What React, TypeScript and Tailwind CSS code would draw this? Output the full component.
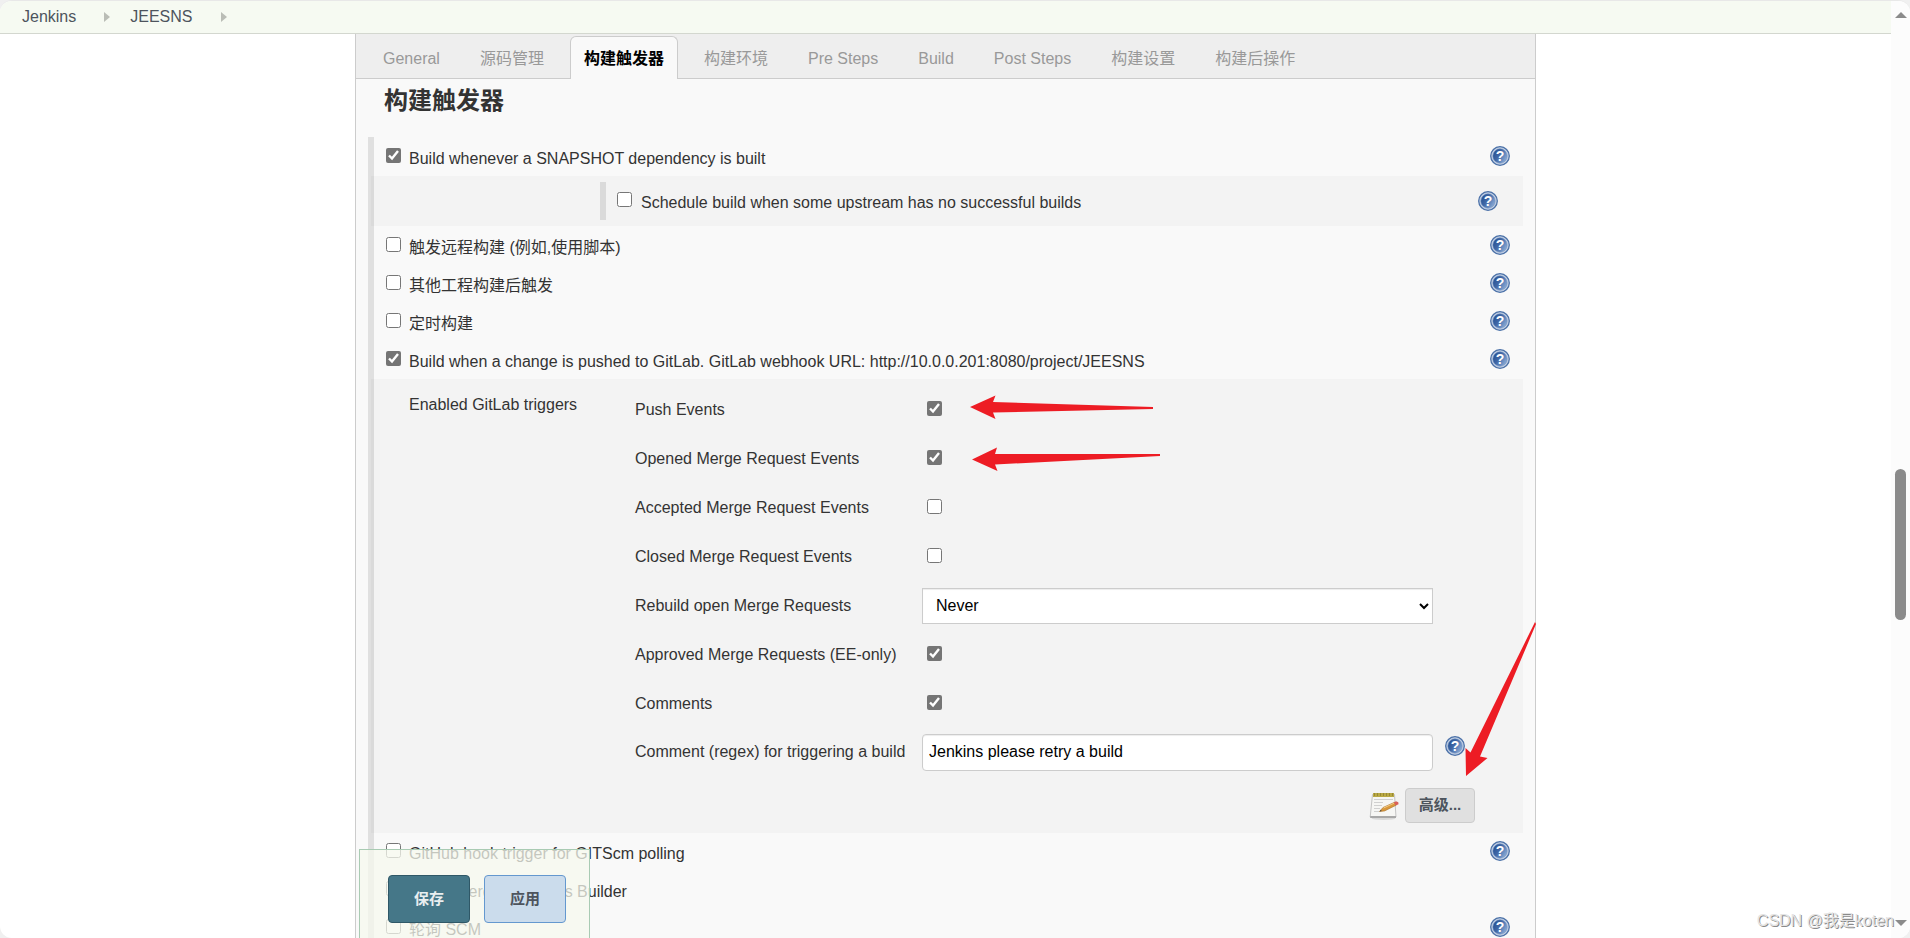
import { useId, useState } from 'react';
import clsx from 'clsx';

interface Tab {
    id: string;
    label: string;
}

interface GitlabEvent {
    id: string;
    label: string;
    checked: boolean;
}

const TABS: Tab[] = [
    { id: 'general', label: 'General' },
    { id: 'scm', label: '源码管理' },
    { id: 'triggers', label: '构建触发器' },
    { id: 'env', label: '构建环境' },
    { id: 'pre', label: 'Pre Steps' },
    { id: 'build', label: 'Build' },
    { id: 'post', label: 'Post Steps' },
    { id: 'settings', label: '构建设置' },
    { id: 'after', label: '构建后操作' },
];

const EVENTS_BEFORE: GitlabEvent[] = [
    { id: 'push', label: 'Push Events', checked: true },
    { id: 'opened', label: 'Opened Merge Request Events', checked: true },
    { id: 'accepted', label: 'Accepted Merge Request Events', checked: false },
    { id: 'closed', label: 'Closed Merge Request Events', checked: false },
];

const EVENTS_AFTER: GitlabEvent[] = [
    { id: 'approved', label: 'Approved Merge Requests (EE-only)', checked: true },
    { id: 'comments', label: 'Comments', checked: true },
];

function HelpButton({ className }: { className?: string }) {
    const gradient = useId();

    return (
        <button type="button" aria-label="Help" className={clsx("block size-5 shrink-0 cursor-pointer", className)}>
            <svg viewBox="0 0 20 20" className="size-5">
                <defs>
                    <linearGradient id={gradient} x1="0" y1="0" x2="1" y2="0.6">
                        <stop offset="0" stopColor="#1f4a8c" />
                        <stop offset="0.5" stopColor="#3f67a6" />
                        <stop offset="1" stopColor="#86a6d2" />
                    </linearGradient>
                </defs>
                <circle cx="10" cy="10" r="9.3" fill="#c3d0e4" stroke="#4b71a8" strokeWidth="1.3" />
                <circle cx="10" cy="10" r="7.2" fill={`url(#${gradient})`} stroke="#6c8cbc" strokeWidth="0.5" />
                <text x="10" y="15" textAnchor="middle" fontSize="14" fontWeight="bold" fill="#ffffff">?</text>
            </svg>
        </button>
    );
}

function NotepadIcon() {
    return (
        <svg viewBox="0 0 30 30" className="size-[30px] shrink-0" aria-hidden="true">
            <ellipse cx="14.5" cy="27.5" rx="12" ry="1.5" fill="#d8d8d8" />
            <path d="M3.5 3.5h22l1.5 22.5H1.2z" fill="#f6f6f4" stroke="#c4c4c4" />
            <path d="M1.2 25H27V27H1.2z" fill="#a8a8a8" />
            <path d="M4 2h21v4H4z" fill="#b9a945" />
            <path d="M5.5 2v3M8.5 2v3M11.5 2v3M14.5 2v3M17.5 2v3M20.5 2v3M23.5 2v3" stroke="#978936" />
            <path d="M5 8.5h19M5 11.5h9M5 14.5h8M5 17.5h6M5 20.5h5" stroke="#d0d0d0" />
            <path d="M10.5 20.5l3.500-4L25.500 11.300l1.500 3-11.500 5.700z" fill="#d9983b" stroke="#a8702a" strokeWidth="0.6" />
            <path d="M14.5 17L25.5 12" stroke="#f3cb86" />
            <path d="M24.800 11.500l2.200-1.200 2.300 1 .2 2-2.700 1.300z" fill="#d9605a" />
            <path d="M10.500 20.500l1.300-1.700.9 1.100z" fill="#444444" />
        </svg>
    );
}

interface TriggerRowProps {
    label: string;
    defaultChecked?: boolean;
    help?: boolean;
}

function TriggerRow({ label, defaultChecked = false, help = true }: TriggerRowProps) {
    return (
        <div className="flex h-[38px] items-start pl-3 pr-[13px]">
            <label className="flex flex-1 items-start gap-2 pt-2.5">
                <input type="checkbox" defaultChecked={defaultChecked} className="size-[15px] accent-[#757575]" />
                <span className="pt-px leading-5">{label}</span>
            </label>
            {help && <HelpButton className="mt-2" />}
        </div>
    );
}

function EventRow({ event }: { event: GitlabEvent }) {
    return (
        <tr className="h-[49px]">
            <td>
                <label htmlFor={event.id}>{event.label}</label>
            </td>
            <td className="pl-[5px]">
                <input
                    id={event.id}
                    type="checkbox"
                    defaultChecked={event.checked}
                    className="mb-0.5 block size-[15px] accent-[#757575]"
                />
            </td>
            <td />
        </tr>
    );
}

function GitlabTriggers() {
    return (
        <div className="relative -ml-[3px] flex bg-black/[0.025] pb-2 pl-[38px] pr-12">
            <div className="w-[226px] shrink-0 pt-4 leading-5">Enabled GitLab triggers</div>
            <div className="flex-1 pt-1.5">
                <table className="w-full table-fixed border-collapse leading-5">
                    <colgroup>
                        <col className="w-[287px]" />
                        <col />
                        <col className="w-[42px]" />
                    </colgroup>
                    <tbody>
                        {EVENTS_BEFORE.map(event => <EventRow key={event.id} event={event} />)}
                        <tr className="h-[49px]">
                            <td><label htmlFor="rebuild">Rebuild open Merge Requests</label></td>
                            <td>
                                <select
                                    id="rebuild"
                                    defaultValue="never"
                                    className="block h-9 w-full border border-[#cccccc] bg-white pl-[9px] text-black shadow-[inset_0_1px_1px_rgba(0,0,0,0.075)]"
                                >
                                    <option value="never">Never</option>
                                    <option value="source">On push to source branch</option>
                                    <option value="both">On push to source or target branch</option>
                                </select>
                            </td>
                            <td />
                        </tr>
                        {EVENTS_AFTER.map(event => <EventRow key={event.id} event={event} />)}
                        <tr className="h-12">
                            <td><label htmlFor="regex">Comment (regex) for triggering a build</label></td>
                            <td>
                                <input
                                    id="regex"
                                    type="text"
                                    defaultValue="Jenkins please retry a build"
                                    className="block h-[37px] w-full rounded border border-[#cccccc] bg-white px-1.5 text-black shadow-[inset_0_1px_1px_rgba(0,0,0,0.075)]"
                                />
                            </td>
                            <td className="pb-3 pl-3"><HelpButton /></td>
                        </tr>
                    </tbody>
                </table>
                <div className="flex h-[49px] items-center justify-end gap-1.5 pt-2.5">
                    <NotepadIcon />
                    <button
                        type="button"
                        className="h-[35px] w-[70px] cursor-pointer rounded border border-[#cccccc] bg-[#e0e0e0] text-[15px] font-bold text-[#4d545d]"
                    >
                        高级...
                    </button>
                </div>
            </div>
        </div>
    );
}

function Breadcrumbs() {
    return (
        <nav className="flex h-[33px] shrink-0 items-center border-b border-[#d3d7cf] bg-[#f6faf2] pl-[22px] text-[#4d545d]">
            {['Jenkins', 'JEESNS'].map(name => (
                <div key={name} className="flex items-center">
                    <a href="#" className="leading-5">{name}</a>
                    <svg viewBox="0 0 6 10" className="ml-7 mr-5 h-2.5 w-1.5" aria-hidden="true">
                        <path d="M0 0l6 5-6 5z" fill="#babdb6" />
                    </svg>
                </div>
            ))}
        </nav>
    );
}

function Scrollbar() {
    return (
        <div className="flex w-[19px] shrink-0 flex-col items-center bg-[#fcfcfc] pb-3 pt-[11px]">
            <svg viewBox="0 0 12 6" className="h-1.5 w-3" aria-hidden="true"><path d="M6 0l6 6H0z" fill="#8b8b8b" /></svg>
            <div className="flex-[451]" />
            <div className="w-[11px] flex-[151] rounded-full bg-[#8b8b8b]" />
            <div className="flex-[300]" />
            <svg viewBox="0 0 12 6" className="h-1.5 w-3" aria-hidden="true"><path d="M0 0h12L6 6z" fill="#8b8b8b" /></svg>
        </div>
    );
}

// Hand-drawn arrows pointing at the options to enable
function Annotations() {
    return (
        <svg
            viewBox="0 0 1181 904"
            className="pointer-events-none absolute -left-px top-0 h-[904px] w-[1181px]"
            fill="#ed1c24"
            aria-hidden="true"
        >
            <path d="M615 373L640.500 361.500 638 368 798 373 798 375 638 378.500 640.500 385z" />
            <path d="M617 425.500L642 413.500 640 420 805 420 805 422 640 430.500 642.500 437z" />
            <path d="M1180 588L1181 590 1125 722.500 1132.500 724 1111 742 1110.500 714 1115.500 718.500z" />
        </svg>
    );
}

export default function App() {
    const [activeTab, setActiveTab] = useState('triggers');

    return (
        <div className="h-screen bg-[#f0f0f0] font-['Liberation_Sans','Noto_Sans_CJK_SC',sans-serif] text-base text-[#333333]">
            <div className="relative flex h-full overflow-hidden rounded-xl border-t border-[#e8e8e8] bg-white">
                <div className="flex min-w-0 flex-1 flex-col">
                    <Breadcrumbs />

                    <main className="relative mx-auto min-h-0 w-full max-w-[1181px] flex-1 border-x border-[#cccccc] bg-[#f9f9f9]">
                        <div className="h-full overflow-hidden">
                            {/* Config tabs */}
                            <div role="tablist" className="flex h-[45px] items-end gap-3 border-b border-[#cccccc] bg-[#eeeeee] pl-[13px]">
                                {TABS.map(tab => (
                                    <button
                                        key={tab.id}
                                        type="button"
                                        role="tab"
                                        aria-selected={tab.id === activeTab}
                                        onClick={() => setActiveTab(tab.id)}
                                        className={clsx(
                                            "-mb-px h-[43px] cursor-pointer whitespace-nowrap rounded-t-md border border-b-0 px-[13px] pt-px leading-5",
                                            tab.id === activeTab
                                                ? "border-[#cccccc] bg-[#f9f9f9] font-bold text-black"
                                                : "border-transparent text-[#999999]"
                                        )}
                                    >
                                        {tab.label}
                                    </button>
                                ))}
                            </div>

                            <h1 className="pl-7 pt-1.5 text-2xl font-bold leading-8">构建触发器</h1>

                            {/* Trigger list */}
                            <section className="ml-3 mr-3 mt-5 border-l-[6px] border-[#e0e0e0] pt-px">
                                <TriggerRow label="Build whenever a SNAPSHOT dependency is built" defaultChecked />
                                <div className="relative -ml-[3px] mb-px bg-black/[0.025] py-1.5 pl-[229px]">
                                    <div className="border-l-[6px] border-[#dadada]">
                                        <div className="flex h-[38px] items-start pl-[11px] pr-[25px]">
                                            <label className="flex flex-1 items-start gap-[9px] pt-2.5">
                                                <input type="checkbox" className="size-[15px] accent-[#757575]" />
                                                <span className="pt-px leading-5">Schedule build when some upstream has no successful builds</span>
                                            </label>
                                            <HelpButton className="mt-[9px]" />
                                        </div>
                                    </div>
                                </div>
                                <TriggerRow label="触发远程构建 (例如,使用脚本)" />
                                <TriggerRow label="其他工程构建后触发" />
                                <TriggerRow label="定时构建" />
                                <TriggerRow
                                    label="Build when a change is pushed to GitLab. GitLab webhook URL: http://10.0.0.201:8080/project/JEESNS"
                                    defaultChecked
                                />
                                <GitlabTriggers />
                                <TriggerRow label="GitHub hook trigger for GITScm polling" />
                                <TriggerRow label="Gitlab Merge Requests Builder" help={false} />
                                <TriggerRow label="轮询 SCM" />
                            </section>
                        </div>

                        <Annotations />

                        {/* Sticky save bar */}
                        <div className="absolute bottom-0 left-[3px] flex gap-3.5 border border-b-0 border-[#a9cbb3] bg-[#f5f8ee]/75 pb-[15px] pl-7 pr-[23px] pt-[25px]">
                            <button
                                type="button"
                                className="h-12 w-[82px] cursor-pointer rounded border border-[#2f5867] bg-[#457788] text-[15px] font-bold text-[#e8eef0]"
                            >
                                保存
                            </button>
                            <button
                                type="button"
                                className="h-12 w-[82px] cursor-pointer rounded border border-[#6498cf] bg-[#cbdcec] text-[15px] font-bold text-[#4d545d]"
                            >
                                应用
                            </button>
                        </div>
                    </main>
                </div>

                <Scrollbar />

                <div className="absolute bottom-[7px] right-4 leading-5 text-[#e4e4e4] [text-shadow:1px_1px_0_#8b8b8b]">
                    CSDN @我是koten
                </div>
            </div>
        </div>
    );
}
